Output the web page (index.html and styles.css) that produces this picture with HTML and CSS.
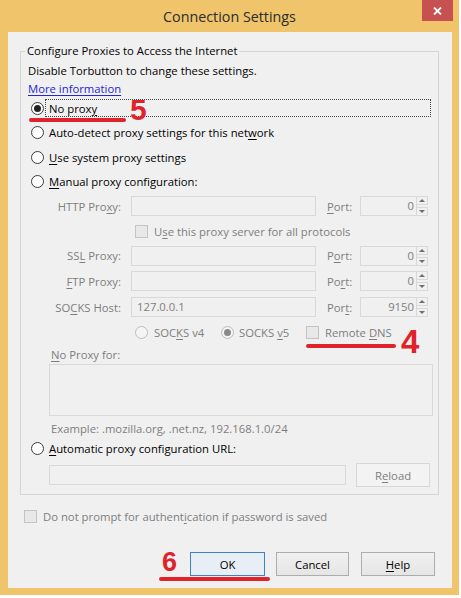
FILE: index.html
```html
<!DOCTYPE html>
<html lang="en">
<head>
    <meta charset="UTF-8">
    <title>Connection Settings</title>
    <link rel="stylesheet" href="styles.css">
</head>
<body>
<div class="window">
    <div class="titlebar">
        <span class="title">Connection Settings</span>
        <span class="close">
            <svg width="9" height="8" viewBox="0 0 9 8"><path d="M1 0.5 L8 7.5 M8 0.5 L1 7.5" stroke="#fff" stroke-width="1.8"/></svg>
        </span>
    </div>

    <div class="client">
        <fieldset class="group">
            <legend>Configure Proxies to Access the Internet</legend>
            <div class="line first">Disable Torbutton to change these settings.</div>
            <div class="line"><a class="link" href="#">More information</a></div>

            <div class="opt h22"><span class="radio on"></span><span class="focus">No prox<u>y</u></span></div>
            <div class="opt h26">
                <span class="radio"></span><span>Auto-detect proxy settings for this net<u>w</u>ork</span>
            </div>
            <div class="opt h24"><span class="radio"></span><span><u>U</u>se system proxy settings</span></div>
            <div class="opt h24"><span class="radio"></span><span><u>M</u>anual proxy configuration:</span></div>

            <!-- manual proxy rows, all disabled -->
            <div class="row h26">
                <span class="label">HTTP Pro<u>x</u>y:</span>
                <span class="box host"></span>
                <span class="portlabel"><u>P</u>ort:</span>
                <span class="box port">0</span>
                <span class="spin"><i class="up"></i><i class="down"></i></span>
            </div>
            <div class="row h24 sub">
                <span class="check"></span><span class="dim">U<u>s</u>e this proxy server for all protocols</span>
            </div>
            <div class="row h25">
                <span class="label">SS<u>L</u> Proxy:</span>
                <span class="box host"></span>
                <span class="portlabel">P<u>o</u>rt:</span>
                <span class="box port">0</span>
                <span class="spin"><i class="up"></i><i class="down"></i></span>
            </div>
            <div class="row h26">
                <span class="label"><u>F</u>TP Proxy:</span>
                <span class="box host"></span>
                <span class="portlabel">Po<u>r</u>t:</span>
                <span class="box port">0</span>
                <span class="spin"><i class="up"></i><i class="down"></i></span>
            </div>
            <div class="row h26">
                <span class="label">SO<u>C</u>KS Host:</span>
                <span class="box host">127.0.0.1</span>
                <span class="portlabel">Por<u>t</u>:</span>
                <span class="box port">9150</span>
                <span class="spin"><i class="up"></i><i class="down"></i></span>
            </div>
            <div class="row h24 sub">
                <span class="pick v4"><span class="radio off"></span><span>SOC<u>K</u>S v4</span></span>
                <span class="pick v5"><span class="radio off on"></span><span>SOCKS <u>v</u>5</span></span>
                <span class="pick"><span class="check"></span><span>Remote <u>D</u>NS</span></span>
            </div>

            <div class="line indent dim"><span><u>N</u>o Proxy for:</span></div>
            <div class="textarea"></div>
            <div class="line indent dim example">Example: .mozilla.org, .net.nz, 192.168.1.0/24</div>

            <div class="opt h22"><span class="radio"></span><span><u>A</u>utomatic proxy configuration URL:</span></div>
            <div class="urlrow">
                <span class="box url"></span>
                <span class="btn dim reload">R<u>e</u>load</span>
            </div>
        </fieldset>

        <div class="prompt dim">
            <span class="check"></span><span>Do not prompt for authent<u>i</u>cation if password is saved</span>
        </div>

        <div class="buttons">
            <span class="btn default ok">OK</span>
            <span class="btn cancel">Cancel</span>
            <span class="btn help"><u>H</u>elp</span>
        </div>
    </div>

    <!-- red annotations drawn over the dialog -->
    <span class="mark m5"></span><span class="num n5">5</span>
    <span class="mark m4"></span><span class="num n4">4</span>
    <span class="mark m6"></span><span class="num n6">6</span>
</div>
</body>
</html>
```

FILE: styles.css
```css
:root {
    --frame: #efc46b;
    --face: #f0f0f0;
    --text: #000;
    --gray: #7e7e7e;
    --edge: #d9d9d9;
    --red: #e0232b;
}

body {
    margin: 0;
    background: #fff;
    font-family: "Open Sans", "Noto Sans", sans-serif;
    font-size: 11.3px;
    color: var(--text);
}

u {
    text-decoration-thickness: 1px;
    text-underline-offset: 2px;
}

.window {
    position: relative;
    width: 459px;
    height: 595px;
    background: var(--frame);
}

/* Title bar */
.titlebar {
    position: relative;
    height: 32px;
    display: flex;
    align-items: center;
    justify-content: center;
}

.title {
    font-size: 14.3px;
    color: #2c2c2c;
}

.close {
    position: absolute;
    top: 0;
    right: 6px;
    width: 31px;
    height: 21px;
    background: #c75050;
    display: flex;
    align-items: center;
    justify-content: center;
}

/* Client area */
.client {
    margin: 0 7px 0 8px;
    height: 556px;
    box-sizing: border-box;
    background: var(--face);
    padding: 11px 13px 0 12px;
}

.group {
    margin: 0;
    min-width: 0;
    width: 419px;
    box-sizing: border-box;
    padding: 0 5px 5px 7px;
    border: 1px solid #d5d5d5;
}

.group legend {
    padding: 0 2px;
    margin-left: -3px;
    line-height: 16px;
}

.line {
    height: 18px;
    display: flex;
    align-items: center;
    white-space: nowrap;
}

.line.first {
    margin-top: 2px;
}

.link {
    color: #2525d6;
    text-decoration: underline;
    text-underline-offset: 2px;
}

.opt {
    display: flex;
    align-items: center;
    gap: 5px;
    margin-left: 3px;
    white-space: nowrap;
}

.h22 { height: 22px; }
.h24 { height: 24px; }
.h25 { height: 25px; }
.h26 { height: 26px; }

.focus {
    flex: 1;
    height: 18px;
    box-sizing: border-box;
    margin-left: -4px;
    margin-right: 2px;
    padding-left: 3px;
    border: 1px dotted #444;
    display: flex;
    align-items: center;
}

/* Radio and checkbox */
.radio {
    width: 13px;
    height: 13px;
    box-sizing: border-box;
    border-radius: 50%;
    border: 1px solid #3c3c3c;
    background: #fff;
    display: flex;
    align-items: center;
    justify-content: center;
    flex: none;
}

.radio.on::after {
    content: "";
    width: 7px;
    height: 7px;
    border-radius: 50%;
    background: #222;
}

.radio.off {
    border-color: #bcbcbc;
    background: #f4f4f4;
}

.radio.off.on::after {
    background: #8a8a8a;
}

.check {
    width: 13px;
    height: 13px;
    box-sizing: border-box;
    border: 1px solid #c4c4c4;
    background: #e8e8e8;
    flex: none;
}

.dim {
    color: var(--gray);
}

/* Manual proxy rows */
.row {
    display: flex;
    align-items: center;
    white-space: nowrap;
    color: var(--gray);
}

.row .label {
    width: 93px;
    text-align: right;
}

.box {
    height: 20px;
    box-sizing: border-box;
    border: 1px solid var(--edge);
    background: var(--face);
    color: var(--gray);
    line-height: 18px;
    padding: 0 5px;
}

.box.host {
    width: 185px;
    margin-left: 10px;
}

.portlabel {
    width: 33px;
    margin-left: 11px;
}

.box.port {
    width: 57px;
    text-align: right;
    padding-right: 2px;
}

.spin {
    width: 11px;
    height: 20px;
    display: flex;
    flex-direction: column;
    justify-content: space-between;
}

.spin i {
    height: 9px;
    border: 1px solid var(--edge);
    border-left: none;
    box-sizing: border-box;
    display: flex;
    align-items: center;
    justify-content: center;
}

.spin i::after {
    content: "";
    border-left: 3px solid transparent;
    border-right: 3px solid transparent;
}

.spin .up::after {
    border-bottom: 3px solid #6e6e6e;
}

.spin .down::after {
    border-top: 3px solid #6e6e6e;
}

.row.sub {
    padding-left: 107px;
    gap: 6px;
}

.pick {
    display: flex;
    align-items: center;
    gap: 6px;
}

.pick.v4 {
    width: 80px;
}

.pick.v5 {
    width: 79px;
    gap: 5px;
}

.indent {
    margin-left: 23px;
}

.line.indent:not(.example) {
    margin-top: 1px;
}

.textarea {
    margin: 1px 0 0 21px;
    height: 52px;
    box-sizing: border-box;
    border: 1px solid var(--edge);
}

.example {
    margin-top: 3px;
}

.urlrow {
    margin: 2px 2px 0 21px;
    height: 28px;
    display: flex;
    align-items: center;
    gap: 10px;
}

.box.url {
    width: 297px;
}

/* Buttons */
.btn {
    height: 24px;
    box-sizing: border-box;
    border: 1px solid #adadad;
    background: linear-gradient(#f0f0f0, #e5e5e5);
    display: flex;
    align-items: center;
    justify-content: center;
}

.btn.reload {
    width: 74px;
    border-color: #d7d7d7;
    background: #f3f3f3;
}

.prompt {
    margin-top: 10px;
    height: 22px;
    padding-left: 4px;
    display: flex;
    align-items: center;
    gap: 6px;
}

.buttons {
    margin: 25px 4px 0 0;
    display: flex;
    justify-content: flex-end;
}

.btn.ok {
    width: 75px;
    border-color: #3c82c4;
    background: #e8eef5;
}

.btn.cancel {
    width: 73px;
    margin-left: 11px;
}

.btn.help {
    width: 74px;
    margin-left: 12px;
}

/* Red annotations */
.mark {
    position: absolute;
    height: 4px;
    border-radius: 2px;
    background: var(--red);
}

.m5 { left: 29px; top: 118px; width: 97px; }
.m4 { left: 306px; top: 344px; width: 90px; }
.m6 { left: 159px; top: 577px; width: 111px; }

.num {
    position: absolute;
    color: var(--red);
    font-family: "Liberation Sans", sans-serif;
    font-weight: bold;
    line-height: 1;
}

.n5 { left: 130px; top: 95px; font-size: 30px; }
.n4 { left: 401px; top: 325px; font-size: 33px; }
.n6 { left: 162px; top: 549px; font-size: 27px; }
```
